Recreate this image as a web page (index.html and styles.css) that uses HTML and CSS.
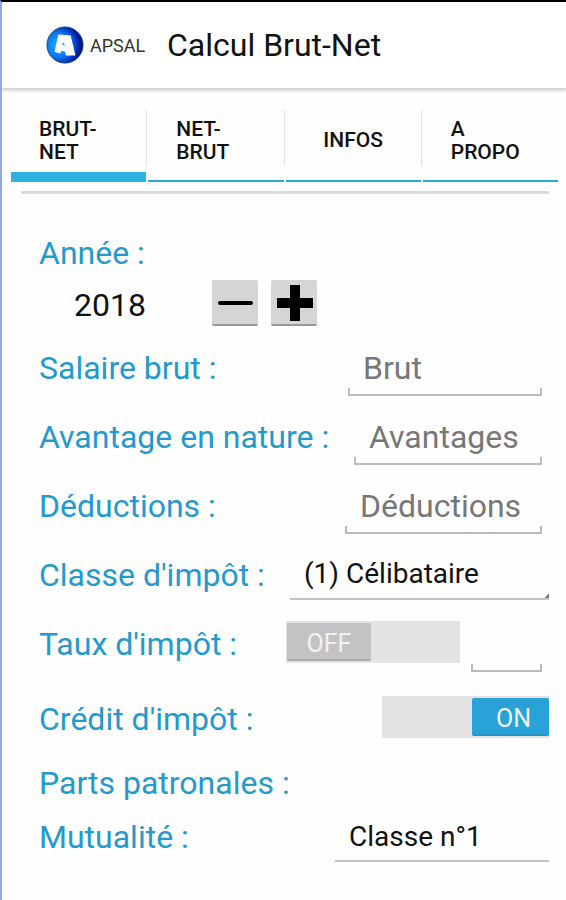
FILE: index.html
```html
<!DOCTYPE html>
<html lang="fr">
<head>
<meta charset="utf-8">
<meta name="viewport" content="width=device-width, initial-scale=1">
<title>Calcul Brut-Net</title>
<link rel="stylesheet" href="styles.css">
</head>

<body>

<!-- header -->
<header class="topbar">
  <svg class="logo" viewBox="0 0 40 40" aria-hidden="true">
    <defs>
      <radialGradient id="ball" cx="0.32" cy="0.5" r="0.7">
        <stop offset="0" stop-color="#27b4ff"/>
        <stop offset="0.5" stop-color="#0c72f2"/>
        <stop offset="0.8" stop-color="#0423a8"/>
        <stop offset="1" stop-color="#020a58"/>
      </radialGradient>
    </defs>
    <circle cx="20" cy="20" r="19" fill="url(#ball)" stroke="#124a7c" stroke-width="1"/>
    <path fill="#fff" fill-rule="evenodd" d="M13 9 L26 10 L31 31 L21 31 L20 27 L16 26 L15 29 L9 27 Z M18 17 L17 20 L20 20 Z"/>
  </svg>
  <span class="brand">APSAL</span>
  <h1 class="title">Calcul Brut-Net</h1>
</header>

<!-- tabs -->
<nav class="tabs">
  <button type="button" class="tab active"><span>BRUT-<br>NET</span></button>
  <button type="button" class="tab"><span>NET-<br>BRUT</span></button>
  <button type="button" class="tab center"><span>INFOS</span></button>
  <button type="button" class="tab"><span>A<br>PROPO</span></button>
</nav>

<!-- form -->
<form class="form">
  <div class="row short">
    <label for="annee">Année :</label>
  </div>
  <div class="row stepper">
    <input type="text" id="annee" class="year" value="2018">
    <button type="button" class="step" aria-label="moins">
      <svg viewBox="0 0 46 44"><path d="M8 23H39" stroke="#000" stroke-width="4" stroke-linecap="round"/></svg>
    </button>
    <button type="button" class="step" aria-label="plus">
      <svg viewBox="0 0 46 44"><path d="M6 23H42M24 5V41" stroke="#000" stroke-width="10"/></svg>
    </button>
  </div>
  <div class="row">
    <label for="brut">Salaire brut :</label>
    <input type="text" id="brut" class="field" placeholder="Brut">
  </div>
  <div class="row">
    <label for="avantages">Avantage en nature :</label>
    <input type="text" id="avantages" class="field medium" placeholder="Avantages">
  </div>
  <div class="row">
    <label for="deductions">Déductions :</label>
    <input type="text" id="deductions" class="field large" placeholder="Déductions">
  </div>
  <div class="row">
    <label for="classe">Classe d'impôt :</label>
    <select id="classe" class="spinner wide">
      <option>(1) Célibataire</option>
    </select>
  </div>
  <div class="row">
    <label for="taux">Taux d'impôt :</label>
    <div class="switch">
      <input type="checkbox" id="taux">
      <span class="thumb">OFF</span>
    </div>
    <input type="text" class="field small" aria-label="Taux">
  </div>
  <div class="row tall">
    <label for="credit">Crédit d'impôt :</label>
    <div class="switch on">
      <input type="checkbox" id="credit" checked>
      <span class="thumb">ON</span>
    </div>
  </div>
  <div class="row short">
    <span class="heading">Parts patronales :</span>
  </div>
  <div class="row last">
    <label for="mutualite">Mutualité :</label>
    <select id="mutualite" class="spinner">
      <option>Classe n°1</option>
    </select>
  </div>
</form>

</body>
</html>
```
FILE: styles.css
```css
* {box-sizing: border-box;}

body {
  margin: 0;
  min-height: 100vh;
  border-top: 2px solid #000;
  border-left: 2px solid #8fa8e0;
  background-color: #fefefe;
  color: #111;
  font-family: Roboto, sans-serif;
}

input, select, button {
  font-family: inherit;
  color: inherit;
  border: none;
  border-radius: 0;
  outline: none;
  appearance: none;
}

/* Header */
.topbar {
  display: flex;
  align-items: center;
  height: 86px;
  padding-left: 44px;
  background-color: #fff;
  box-shadow: 0 1px 4px 1px #c4c4c4;
}

.logo {
  width: 38px;
  height: 38px;
}

.brand {
  width: 83px;
  padding-left: 6px;
  font-size: 18px;
  color: #333;
}

.title {
  margin: 0;
  font-size: 32px;
  font-weight: 400;
}

/* Tabs */
.tabs {
  display: flex;
  gap: 2px;
  margin: 22px 8px 0 9px;
}

.tab {
  position: relative;
  flex: 1 1 0;
  height: 72px;
  padding: 0 0 9px;
  border-bottom: 2px solid #2aa9dc;
  background-color: transparent;
  font-size: 21px;
  font-weight: 500;
  line-height: 23px;
  text-align: left;
  cursor: pointer;
}

.tab span {
  display: block;
  padding-left: 28px;
}

.tab.center span {
  padding-left: 0;
  text-align: center;
}

.tab.active {
  border-bottom: 10px solid #2cb1e1;
  padding-bottom: 1px;
}

/* thin divider on the left of each tab */
.tab + .tab::before {
  content: "";
  position: absolute;
  top: 0;
  left: -2px;
  width: 1px;
  height: 56px;
  background-color: #e2e2e2;
}

/* Form */
.form {
  margin: 9px 17px 0 19px;
  padding: 35px 0 32px 18px;
  border-top: 3px solid #dadada;
}

.row {
  display: flex;
  align-items: center;
  height: 69px;
}

.row.short {height: 48px;}
.row.tall {height: 81px;}
.row.last {height: 60px;}

.row label, .heading {
  margin-right: auto;
  font-size: 32px;
  color: #2499cc;
  white-space: nowrap;
}

.row.stepper {
  align-items: flex-start;
  height: 56px;
  padding-top: 3px;
  gap: 13px;
}

.year {
  width: 160px;
  height: 50px;
  padding: 0 0 0 35px;
  background-color: transparent;
  font-size: 32px;
}

.step {
  width: 46px;
  height: 46px;
  padding: 0;
  border-bottom: 2px solid #999;
  border-radius: 2px;
  background-color: #d5d5d5;
  cursor: pointer;
}

.step svg {
  display: block;
  width: 46px;
  height: 44px;
}

/* underlined field with a short tick at both ends */
.field {
  width: 194px;
  height: 56px;
  margin-right: 7px;
  padding: 0 0 0 15px;
  background:
    linear-gradient(#bbb, #bbb) left bottom / 2px 8px no-repeat,
    linear-gradient(#bbb, #bbb) right bottom / 2px 8px no-repeat,
    linear-gradient(#bbb, #bbb) left bottom / 100% 2px no-repeat;
  font-size: 32px;
}

.field::placeholder {
  color: #777;
  opacity: 1;
}

.field.medium {width: 188px;}
.field.large {width: 197px;}

.field.small {
  width: 71px;
  margin-left: 11px;
}

.spinner {
  width: 214px;
  height: 50px;
  padding: 0 0 0 14px;
  border-bottom: 2px solid #c4c4c4;
  background-color: transparent;
  font-size: 28px;
}

.spinner.wide {
  width: 259px;
  background: linear-gradient(135deg, transparent 50%, #777 50%) right bottom / 5px 5px no-repeat;
}

/* Switches */
.switch {
  position: relative;
  display: flex;
  width: 174px;
  height: 42px;
  margin-bottom: 4px;
  padding: 2px 1px;
  background-color: #e4e2e5;
}

.switch input {
  position: absolute;
  inset: 0;
  width: 100%;
  height: 100%;
  margin: 0;
  cursor: pointer;
}

.thumb {
  width: 84px;
  border-bottom: 2px solid #aaa;
  border-radius: 2px;
  background-color: #c4c2c5;
  color: #f2f2f2;
  font-size: 25px;
  line-height: 42px;
  text-align: center;
}

.switch.on {
  width: 167px;
  justify-content: flex-end;
  padding-right: 0;
}

.switch.on .thumb {
  width: 77px;
  padding-left: 6px;
  border-bottom-color: #2596c4;
  background-color: #29a3d7;
}
```
